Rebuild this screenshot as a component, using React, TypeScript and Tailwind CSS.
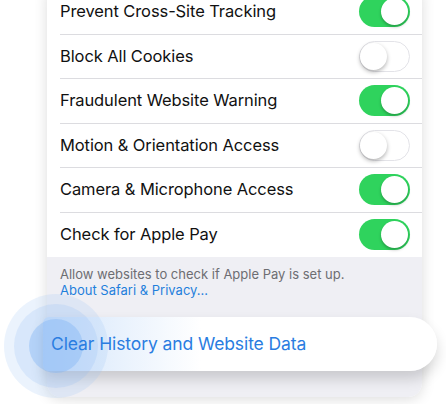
const rows: { label: string; on: boolean }[] = [
  { label: 'Prevent Cross-Site Tracking', on: true },
  { label: 'Block All Cookies', on: false },
  { label: 'Fraudulent Website Warning', on: true },
  { label: 'Motion & Orientation Access', on: false },
  { label: 'Camera & Microphone Access', on: true },
  { label: 'Check for Apple Pay', on: true },
];

function Toggle({ on }: { on: boolean }) {
  if (on) {
    return (
      <div className="flex h-[31px] w-[51px] items-center justify-end rounded-full bg-[#2fd35d] p-[2px]">
        <div className="h-[27px] w-[27px] rounded-full bg-white shadow-[0_2px_3px_rgba(0,0,0,0.25)]" />
      </div>
    );
  }
  return (
    <div className="flex h-[31px] w-[51px] items-center justify-start rounded-full border-[1.5px] border-[#e3e3e8] bg-white">
      <div className="h-[27px] w-[27px] rounded-full bg-white shadow-[0_2px_4px_rgba(0,0,0,0.3)]" />
    </div>
  );
}

export default function App() {
  return (
    <div
      className="relative h-[404px] w-[446px] overflow-hidden bg-white"
      style={{ fontFamily: 'Inter, "Noto Sans", sans-serif' }}
    >
      <div className="ml-[47px] -mt-[10px] w-[375px] overflow-hidden rounded-b-[14px] shadow-[0_2px_14px_rgba(0,0,0,0.14)]">
        <div className="bg-white">
          {rows.map((r, i) => (
            <div key={r.label} className="pl-[13px]">
              <div
                className={`flex h-[44.5px] items-center justify-between pr-[12px] ${
                  i < rows.length - 1 ? 'border-b border-[#dcdce0]' : ''
                }`}
              >
                <span className="text-[16.5px] tracking-[-0.1px] text-[#111]">{r.label}</span>
                <Toggle on={r.on} />
              </div>
            </div>
          ))}
        </div>
        <div className="h-[140px] bg-[#efeff4] px-[13px] pt-[9px] text-[13px] leading-[16px]">
          <div className="text-[#6d6d72]">Allow websites to check if Apple Pay is set up.</div>
          <div className="text-[#1f7fdc]">About Safari &amp; Privacy...</div>
        </div>
      </div>

      {/* popped out action row */}
      <div className="absolute left-[43px] top-[317px] flex h-[54px] w-[394px] items-center rounded-l-[6px] rounded-r-[27px] bg-[linear-gradient(to_right,#d3e5fb_0%,#ffffff_40%)] pl-[8px] shadow-[0_8px_14px_rgba(0,0,0,0.16)]">
        <span className="relative z-10 text-[17.5px] tracking-[-0.1px] text-[#2a7de1]">Clear History and Website Data</span>
      </div>

      {/* tap ripple */}
      <div className="pointer-events-none absolute left-[4px] top-[294px] flex h-[104px] w-[104px] items-center justify-center rounded-full bg-[#9cc4f4]/20">
        <div className="flex h-[84px] w-[84px] items-center justify-center rounded-full bg-[#8bbaf3]/20">
          <div className="h-[54px] w-[54px] rounded-full bg-[#7fb5f5]/40" />
        </div>
      </div>
    </div>
  );
}
